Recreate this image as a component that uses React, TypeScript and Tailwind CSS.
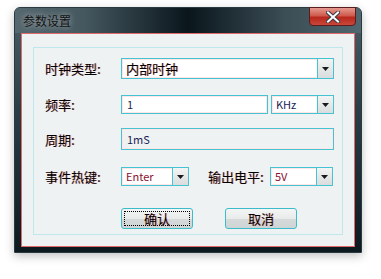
import React from "react";

const fringe = "[text-shadow:1px_0_0_rgba(255,70,70,0.45)]";
const cjk = "font-['Microsoft_YaHei','Noto_Sans_CJK_SC',sans-serif]";

function Arrow() {
  return (
    <div className="flex w-[16px] shrink-0 items-center justify-center border-l border-[#45c3d2] bg-[linear-gradient(180deg,#f3f4f4,#d9dddd)]">
      <svg width="7" height="4" viewBox="0 0 7 4">
        <path d="M0 0h7L3.5 4z" fill="#1a1a1a" />
      </svg>
    </div>
  );
}

function Combo({ value, width, height, big, red }: { value: string; width: string; height: string; big?: boolean; red?: boolean }) {
  return (
    <div className={`flex ${width} ${height} shrink-0 border border-[#45c3d2] bg-white shadow-[inset_0_0_0_1px_#ffe6e6]`}>
      <div
        className={`flex flex-1 items-center pl-[4px] ${big ? `text-[13px] text-black ${fringe}` : "text-[11px]"} ${
          red ? "text-[#8a1030]" : big ? "" : "text-[#1b1b55]"
        }`}
      >
        {value}
      </div>
      <Arrow />
    </div>
  );
}

function Field({ value, width, height, readOnly }: { value: string; width: string; height: string; readOnly?: boolean }) {
  return (
    <div
      className={`flex ${width} ${height} shrink-0 items-center border border-[#45c3d2] pl-[5px] text-[11px] text-[#1b1b55] shadow-[inset_0_0_0_1px_#ffe6e6] ${
        readOnly ? "bg-[#eef2f3]" : "bg-white"
      }`}
    >
      {value}
    </div>
  );
}

function Label({ text, width }: { text: string; width: string }) {
  return <div className={`${width} shrink-0 text-[13px] leading-none text-black ${fringe}`}>{text}</div>;
}

function Btn({ text, focus }: { text: string; focus?: boolean }) {
  return (
    <div className="flex h-[21px] w-[72px] items-center justify-center rounded-[3px] border border-[#3cbccb] bg-[linear-gradient(180deg,#f4f5f5_0%,#e9ebeb_50%,#d6dadb_51%,#cfd4d5_100%)] p-[2px]">
      <div
        className={`flex h-full w-full items-center justify-center text-[13px] text-black ${fringe} ${
          focus ? "border border-dotted border-black" : ""
        }`}
      >
        {text}
      </div>
    </div>
  );
}

export default function App() {
  return (
    <div className={`h-[279px] w-[381px] overflow-hidden bg-white pl-[14px] pt-[7px] ${cjk}`}>
      <div className="flex h-[246px] w-[348px] flex-col rounded-t-[6px] border border-[#2a3a40] bg-[linear-gradient(180deg,#4a5f67_0%,#2b3f47_40%,#0c1a20_100%)] shadow-[0_3px_10px_rgba(0,0,0,0.25)]">
        <div className="relative flex h-[25px] shrink-0 items-center rounded-t-[5px] bg-[linear-gradient(90deg,#56686f_0%,#45575f_20%,#0a161c_50%,#3b4d55_78%,#506770_100%)] pl-[8px]">
          <span className="text-[12px] text-[#141414] [text-shadow:0_0_6px_rgba(255,255,255,0.6)]">参数设置</span>
          <div className="absolute right-[5px] top-[-1px] flex h-[19px] w-[47px] items-center justify-center rounded-b-[4px] border border-[#5a1c1c] bg-[linear-gradient(180deg,#e59a90_0%,#cf5a4d_45%,#b8281d_55%,#c9473a_100%)]">
            <svg width="14" height="12" viewBox="0 0 14 12">
              <path d="M2 1.5l10 9M12 1.5l-10 9" stroke="#3a3a48" strokeWidth="4" strokeLinecap="square" />
              <path d="M2 1.5l10 9M12 1.5l-10 9" stroke="#ffffff" strokeWidth="2" strokeLinecap="square" />
            </svg>
          </div>
        </div>
        <div className="mx-[6px] mb-[5px] flex-1 border border-[#e06a6a] bg-[#eef2f3] px-[11px] pb-[11px] pt-[13px]">
          <div className="flex h-full flex-col border border-[#bfe7ee] pl-[11px]">
            <div className="mt-[10px] flex items-center">
              <Label text="时钟类型:" width="w-[76px]" />
              <Combo value="内部时钟" width="w-[213px]" height="h-[21px]" big />
            </div>
            <div className="mt-[16px] flex items-center">
              <Label text="频率:" width="w-[76px]" />
              <Field value="1" width="w-[147px]" height="h-[19px]" />
              <div className="ml-[3px]">
                <Combo value="KHz" width="w-[63px]" height="h-[19px]" />
              </div>
            </div>
            <div className="mt-[14px] flex items-center">
              <Label text="周期:" width="w-[76px]" />
              <Field value="1mS" width="w-[213px]" height="h-[22px]" readOnly />
            </div>
            <div className="mt-[17px] flex items-center">
              <Label text="事件热键:" width="w-[76px]" />
              <Combo value="Enter" width="w-[68px]" height="h-[19px]" red />
              <div className="ml-[19px]">
                <Label text="输出电平:" width="w-[62px]" />
              </div>
              <Combo value="5V" width="w-[63px]" height="h-[19px]" red />
            </div>
            <div className="mt-[22px] flex items-center pl-[76px]">
              <Btn text="确认" focus />
              <div className="ml-[32px]">
                <Btn text="取消" />
              </div>
            </div>
          </div>
        </div>
      </div>
    </div>
  );
}
